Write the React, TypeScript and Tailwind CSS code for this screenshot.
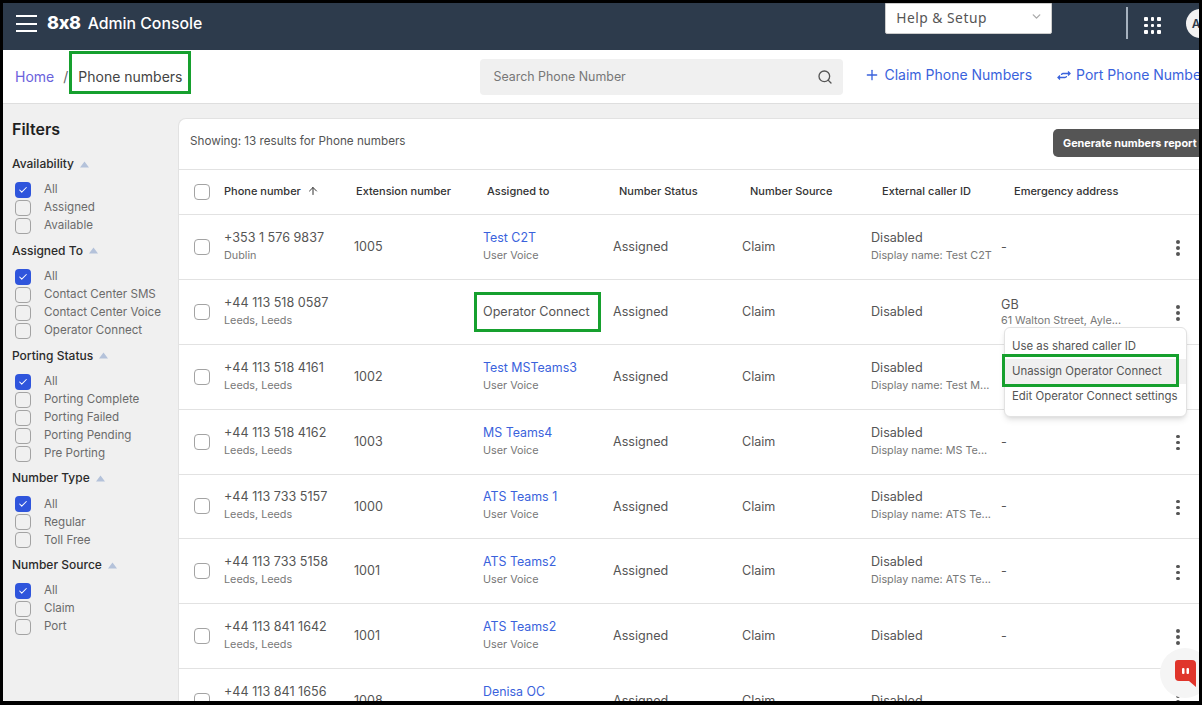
import React from "react";
import { Search, Plus, ArrowUp, ChevronDown, Check } from "lucide-react";

const font = { fontFamily: "Inter, 'Liberation Sans', sans-serif" };

function Box({ checked = false, large = false }: { checked?: boolean; large?: boolean }) {
  if (checked) {
    return (
      <span className="flex h-[16px] w-[16px] shrink-0 items-center justify-center rounded-[4px] bg-[#2f55dc]">
        <Check size={10} strokeWidth={2.5} className="text-white" />
      </span>
    );
  }
  return <span className={`block h-[16px] w-[16px] shrink-0 rounded-[4px] border-[1.5px] border-[#a3a3a3] ${large ? "bg-white" : "bg-[#f0f0f0]"}`} />;
}

function Group({ title, options }: { title: string; options: string[] }) {
  return (
    <div className="mb-[6.8px]">
      <div className="mb-[8px] flex h-[18px] items-center gap-[6px] text-[12px] font-medium text-[#2b2b2b]">
        {title}
        <svg width="9" height="7" viewBox="0 0 9 7">
          <path d="M4.5 0.5 L9 6.5 H0 Z" fill="#b4c2da" />
        </svg>
      </div>
      {options.map((o, i) => (
        <div key={o} className="flex h-[18px] items-center pl-[3px] text-[11.6px] text-[#6b6b6b]">
          <Box checked={i === 0} />
          <span className="ml-[13px] whitespace-nowrap">{o}</span>
        </div>
      ))}
    </div>
  );
}

type Row = {
  phone: string; city: string; ext: string; name: string; kind: string;
  display: string; em: string; emSub?: string;
};

const rows: Row[] = [
  { phone: "+353 1 576 9837", city: "Dublin", ext: "1005", name: "Test C2T", kind: "User Voice", display: "Display name: Test C2T", em: "-" },
  { phone: "+44 113 518 0587", city: "Leeds, Leeds", ext: "", name: "", kind: "", display: "", em: "GB", emSub: "61 Walton Street, Ayle..." },
  { phone: "+44 113 518 4161", city: "Leeds, Leeds", ext: "1002", name: "Test MSTeams3", kind: "User Voice", display: "Display name: Test M...", em: "" },
  { phone: "+44 113 518 4162", city: "Leeds, Leeds", ext: "1003", name: "MS Teams4", kind: "User Voice", display: "Display name: MS Te...", em: "-" },
  { phone: "+44 113 733 5157", city: "Leeds, Leeds", ext: "1000", name: "ATS Teams 1", kind: "User Voice", display: "Display name: ATS Te...", em: "-" },
  { phone: "+44 113 733 5158", city: "Leeds, Leeds", ext: "1001", name: "ATS Teams2", kind: "User Voice", display: "Display name: ATS Te...", em: "-" },
  { phone: "+44 113 841 1642", city: "Leeds, Leeds", ext: "1001", name: "ATS Teams2", kind: "User Voice", display: "", em: "-" },
  { phone: "+44 113 841 1656", city: "Leeds, Leeds", ext: "1008", name: "Denisa OC", kind: "User Voice", display: "", em: "-" },
];

function Kebab() {
  return (
    <div className="flex w-[4px] flex-col gap-[2.5px]">
      <span className="h-[3.5px] w-[3.5px] rounded-full bg-[#555]" />
      <span className="h-[3.5px] w-[3.5px] rounded-full bg-[#555]" />
      <span className="h-[3.5px] w-[3.5px] rounded-full bg-[#555]" />
    </div>
  );
}

function TableRow({ r }: { r: Row }) {
  return (
    <div className="grid h-[64.85px] shrink-0 grid-cols-[45px_130px_129px_130px_129px_129px_130px_175px_1fr] items-center border-b border-[#e2e2e2] text-[12.6px] text-[#555]">
      <div className="pl-[15px]"><Box large /></div>
      <div>
        <div className="leading-[18px]">{r.phone}</div>
        <div className="text-[10.8px] leading-[18px] text-[#777]">{r.city}</div>
      </div>
      <div className="pt-px">{r.ext}</div>
      <div className="-ml-[9px]">
        {r.name ? (
          <div className="pl-[9px]">
            <div className="text-[12.4px] leading-[18px] text-[#3a62dc]">{r.name}</div>
            <div className="text-[10.8px] leading-[18px] text-[#777]">{r.kind}</div>
          </div>
        ) : (
          <div className="flex h-[40px] w-[127px] items-center border-[3px] border-[#16a02e] pt-px pl-[6px]">Operator Connect</div>
        )}
      </div>
      <div className="pt-px">Assigned</div>
      <div className="pt-px">Claim</div>
      <div>
        <div className="leading-[18px]">Disabled</div>
        {r.display && <div className="whitespace-nowrap text-[10.8px] leading-[18px] text-[#777]">{r.display}</div>}
      </div>
      <div>
        <div className="leading-[18px]">{r.em}</div>
        {r.emSub && <div className="whitespace-nowrap text-[10.8px] leading-[14px] text-[#777]">{r.emSub}</div>}
      </div>
      <div className="pt-[2px]"><Kebab /></div>
    </div>
  );
}

export default function App() {
  return (
    <div className="relative flex h-[705px] w-[1202px] flex-col overflow-hidden border-t-[3px] border-r-[3px] border-b-[4px] border-l-[3px] border-black bg-[#f0f0f0]" style={font}>
      {/* top bar */}
      <header className="flex h-[47px] shrink-0 items-start overflow-hidden bg-[#2d3b4c] text-white">
        <div className="mt-[12px] ml-[13px] flex h-[17px] w-[21px] shrink-0 flex-col justify-between">
          <span className="h-[2px] bg-white" /><span className="h-[2px] bg-white" /><span className="h-[2px] bg-white" />
        </div>
        <span className="mt-[7px] ml-[10px] shrink-0 text-[18px] font-extrabold leading-[26px] tracking-[-0.3px]">8x8</span>
        <span className="mt-[10px] ml-[7px] shrink-0 whitespace-nowrap text-[15.8px] font-medium leading-[22px]">Admin Console</span>
        <div className="ml-[683px] flex h-[31px] w-[167px] shrink-0 items-center justify-between rounded-b-[2px] border border-[#ccc] bg-white pr-[8px] pl-[10px] text-[13.8px] tracking-[0.5px] text-[#555]" style={{ fontFamily: "'Noto Sans', sans-serif" }}>
          Help &amp; Setup
          <ChevronDown size={13} strokeWidth={2.5} className="mb-[4px] text-[#aaa]" />
        </div>
        <span className="mt-[4px] ml-[74px] h-[32px] w-[2px] shrink-0 bg-[#a6b2bf]" />
        <div className="mt-[14px] ml-[16px] grid shrink-0 grid-cols-3 gap-[3px]">
          {[0, 1, 2, 3, 4, 5, 6, 7, 8].map((i) => (
            <span key={i} className="h-[3.5px] w-[3.5px] rounded-[1px] bg-white" />
          ))}
        </div>
        <div className="mt-[6px] ml-[25px] flex h-[29px] w-[29px] shrink-0 items-center rounded-full bg-[#f2f2f2] pl-[6px] text-[12px] font-semibold text-[#2d3b4c]">A</div>
      </header>

      {/* breadcrumb bar */}
      <div className="flex h-[54px] shrink-0 items-start overflow-hidden border-b border-[#dedede] bg-white">
        <span className="mt-[17px] ml-[12px] text-[14px] leading-[20px] text-[#6a62dc]">Home</span>
        <span className="mt-[17px] ml-[9px] text-[14px] leading-[20px] text-[#666]">/</span>
        <span className="mt-px ml-[1px] flex h-[43px] shrink-0 items-center border-[3px] border-[#16a02e] px-[6px] pt-[8px] text-[14px] text-[#444]">Phone numbers</span>
        <div className="mt-[9px] ml-[289px] flex h-[36px] w-[363px] shrink-0 items-center justify-between rounded-[4px] bg-[#f0f0f0] pr-[10px] pl-[13px] text-[12.4px] text-[#777]">
          Search Phone Number
          <Search size={16} className="text-[#555]" />
        </div>
        <div className="mt-[15px] ml-[21px] flex shrink-0 items-center gap-[4px] text-[14px] leading-[20px] text-[#3a62dc]">
          <Plus size={16} /> Claim Phone Numbers
        </div>
        <div className="mt-[15px] ml-[25px] flex shrink-0 items-center gap-[5px] whitespace-nowrap text-[14px] leading-[20px] text-[#3a62dc]">
          <svg width="14" height="11" viewBox="0 0 14 11" fill="none" stroke="currentColor" strokeWidth="1.3">
            <path d="M3 5.5 L1 7.5 L3 9.5 M1 7.5 H8 Q9.5 7.5 9.5 6" /><path d="M4.5 5 Q4.5 3.5 6 3.5 H13 M11 1.5 L13 3.5 L11 5.5" />
          </svg>
          Port Phone Numbers
        </div>
      </div>

      {/* body */}
      <div className="flex min-h-0 flex-1">
        <aside className="w-[175px] shrink-0 pt-[14px] pl-[9px]">
          <h2 className="mb-[15px] text-[16px] font-semibold leading-[22px] text-[#1f1f1f]">Filters</h2>
          <Group title="Availability" options={["All", "Assigned", "Available"]} />
          <Group title="Assigned To" options={["All", "Contact Center SMS", "Contact Center Voice", "Operator Connect"]} />
          <Group title="Porting Status" options={["All", "Porting Complete", "Porting Failed", "Porting Pending", "Pre Porting"]} />
          <Group title="Number Type" options={["All", "Regular", "Toll Free"]} />
          <Group title="Number Source" options={["All", "Claim", "Port"]} />
        </aside>

        <main className="mt-[14px] flex min-w-0 flex-1 flex-col overflow-hidden rounded-tl-[8px] border-t border-l border-[#e2e2e2] bg-white">
          <div className="flex h-[51px] shrink-0 items-start justify-between border-b border-[#e2e2e2]">
            <span className="mt-[13px] ml-[11px] text-[11.7px] leading-[18px] text-[#555]">Showing: 13 results for Phone numbers</span>
            <span className="mt-[10px] flex h-[28px] w-[146px] items-center whitespace-nowrap rounded-l-[5px] bg-[#555] pl-[10px] text-[10.85px] font-bold text-white">Generate numbers report</span>
          </div>
          <div className="grid h-[45.2px] shrink-0 grid-cols-[45px_132px_131px_132px_131px_132px_132px_1fr] items-center border-b border-[#e2e2e2] pb-[2px] text-[11px] font-medium text-[#333]">
            <div className="pt-[2px] pl-[15px]"><Box large /></div>
            <div className="flex items-center gap-[6px]">Phone number <ArrowUp size={12} className="text-[#333]" /></div>
            <div>Extension number</div>
            <div>Assigned to</div>
            <div>Number Status</div>
            <div>Number Source</div>
            <div>External caller ID</div>
            <div>Emergency address</div>
          </div>
          {rows.map((r) => <TableRow key={r.phone} r={r} />)}
        </main>
      </div>

      {/* row menu */}
      <div className="absolute top-[324px] left-[1001px] flex h-[90px] w-[183px] flex-col justify-center rounded-[6px] border border-[#e2e2e2] bg-white pb-px text-[11.4px] text-[#555] shadow-md">
        <div className="flex h-[25px] items-center whitespace-nowrap pl-[7px]">Use as shared caller ID</div>
        <div className="flex h-[25px] items-center whitespace-nowrap bg-[#f0f0f0] pl-[7px]">Unassign Operator Connect</div>
        <div className="flex h-[25px] items-center whitespace-nowrap pl-[7px]">Edit Operator Connect settings</div>
      </div>
      <div className="absolute top-[351px] left-[999px] h-[33px] w-[177px] border-[3px] border-[#16a02e]" />

      {/* chat widget */}
      <div className="absolute top-[645px] left-[1157px] flex h-[50px] w-[50px] items-center rounded-full bg-[#f5f5f5] pl-[15px]">
        <svg width="21" height="27" viewBox="0 0 21 27">
          <path d="M3 0 H17 Q21 0 21 4 V27 L14 21 H4 Q0 21 0 17 V3 Q0 0 3 0 Z" fill="#e0352b" />
          <rect x="7" y="8" width="2.5" height="6" rx="1" fill="#fff" />
          <rect x="11.5" y="8" width="2.5" height="6" rx="1" fill="#fff" />
        </svg>
      </div>
    </div>
  );
}
